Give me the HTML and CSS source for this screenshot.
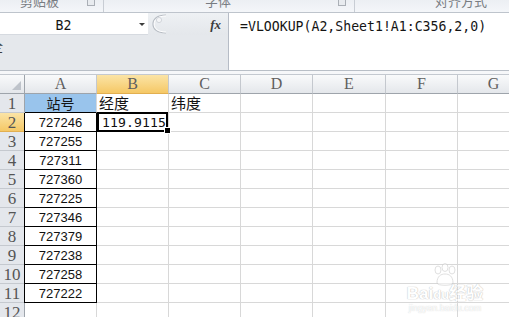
FILE: index.html
```html
<!DOCTYPE html>
<html lang="zh-CN">

<head>
    <meta charset="UTF-8">
    <meta name="viewport" content="width=device-width, initial-scale=1.0">
    <title>VLOOKUP</title>
    <link rel="stylesheet" href="styles.css">
</head>

<body>
    <div class="ribbon">
        <div class="group g-clip"><span class="glabel">剪贴板</span><span class="launch"></span></div>
        <div class="group g-font"><span class="glabel">字体</span><span class="launch"></span></div>
        <div class="group g-align"><span class="glabel">对齐方式</span></div>
    </div>

    <div class="fbar">
        <div class="fleft">
            <div class="namerow">
                <div class="namebox"><span class="nameval">B2</span><span class="drop"></span></div>
                <div class="fctl">
                    <svg class="dimple" width="16" height="20" viewBox="0 0 16 20">
                        <path d="M15 1 C6 1 2 5 2 10 C2 15 6 19 15 19" fill="none" stroke="#b7bcc3" stroke-width="1.2"/>
                        <path d="M15 2 C7 2 3.2 5.5 3.2 10 C3.2 14.5 7 18 15 18" fill="none" stroke="#ffffff" stroke-width="1"/>
                        <circle cx="8" cy="6" r="2.6" fill="#f4f5f7" stroke="#c9cdd3" stroke-width="0.8"/>
                    </svg>
                    <span class="fx">fx</span>
                </div>
            </div>
            <div class="fbelow"><span class="cut">全</span></div>
        </div>
        <div class="finput">=VLOOKUP(A2,Sheet1!A1:C356,2,0)</div>
    </div>

    <div class="gap"></div>

    <div class="sheet" id="sheet">
        <div class="mark">
            <svg class="paw" width="30" height="24" viewBox="0 0 30 24">
                <ellipse cx="8" cy="7" rx="3" ry="4" fill="#fff" stroke="#c8c8c8"/>
                <ellipse cx="15" cy="4.5" rx="3" ry="4" fill="#fff" stroke="#c8c8c8"/>
                <ellipse cx="22" cy="7" rx="3" ry="4" fill="#fff" stroke="#c8c8c8"/>
                <path d="M7 20 C7 13 11 11 15 11 C19 11 23 13 23 20 C23 23 7 23 7 20 Z" fill="#fff" stroke="#c8c8c8"/>
            </svg>
            <div class="mark-name">Bai<span class="du">du</span>经验</div>
            <div class="mark-url">jingyan.baidu.com</div>
        </div>
    </div>

    <script>
        const sheet = document.getElementById("sheet");
        const cols = ["A", "B", "C", "D", "E", "F", "G"];
        const ids = ["727246", "727255", "727311", "727360", "727225",
            "727346", "727379", "727238", "727258", "727222"];

        function addCell(cls, text) {
            const cell = document.createElement("DIV");
            cell.className = "cell " + cls;
            if (text) {
                cell.textContent = text;
            }
            sheet.appendChild(cell);
            return cell;
        }

        addCell("corner", "");
        for (let i = 0; i < cols.length; i++) {
            addCell(cols[i] == "B" ? "colhead active" : "colhead", cols[i]);
        }

        for (let r = 1; r <= 12; r++) {
            addCell(r == 2 ? "rowhead active" : "rowhead", String(r));
            for (let c = 0; c < cols.length; c++) {
                let cls = "";
                let text = "";
                if (c == 0 && r == 1) {
                    cls = "title";
                    text = "站号";
                } else if (c == 0 && r <= 11) {
                    cls = "boxed";
                    text = ids[r - 2];
                } else if (c == 1 && r == 1) {
                    cls = "label";
                    text = "经度";
                } else if (c == 2 && r == 1) {
                    cls = "label";
                    text = "纬度";
                } else if (c == 1 && r == 2) {
                    cls = "value selected";
                    text = "119.9115";
                }
                addCell(cls, text);
            }
        }
    </script>
</body>

</html>
```

FILE: styles.css
```css
body {
    margin: 0;
    width: 509px;
    height: 317px;
    overflow: hidden;
    background: rgb(255, 255, 255);
    font-family: "Liberation Sans", "Noto Sans CJK SC", sans-serif;
}

/* ribbon group captions, cut off at the top */
.ribbon {
    display: flex;
    height: 12px;
    overflow: hidden;
    background: linear-gradient(rgb(236, 239, 243), rgb(244, 246, 249));
    border-bottom: 1px solid rgb(190, 196, 204);
}

.group {
    display: flex;
    align-items: flex-start;
    box-sizing: border-box;
    border-right: 1px solid rgb(200, 205, 212);
    flex-shrink: 0;
}

.g-clip {
    width: 104px;
    padding-left: 20px;
}

.g-font {
    width: 251px;
    padding-left: 101px;
}

.g-align {
    flex: 1;
    padding-left: 80px;
    border-right: none;
}

.glabel {
    font-family: "Noto Sans CJK SC", sans-serif;
    font-size: 13px;
    line-height: 14px;
    margin-top: -6px;
    color: rgb(120, 124, 130);
    white-space: nowrap;
}

.launch {
    width: 6px;
    height: 5px;
    margin-left: auto;
    margin-right: 8px;
    border: 1px solid rgb(170, 175, 182);
    border-top: none;
    background: rgb(232, 235, 239);
}

/* formula bar */
.fbar {
    display: flex;
    height: 57px;
    border-bottom: 1px solid rgb(185, 191, 199);
}

.fleft {
    width: 228px;
    display: flex;
    flex-direction: column;
    border-right: 1px solid rgb(182, 188, 198);
    background: rgb(229, 232, 236);
}

.namerow {
    display: flex;
    height: 22px;
}

.namebox {
    width: 148px;
    background: rgb(255, 255, 255);
    display: flex;
    align-items: center;
    border-bottom: 1px solid rgb(214, 218, 224);
}

.nameval {
    flex: 1;
    text-align: center;
    padding-right: 12px;
    padding-top: 3px;
    font-family: "DejaVu Sans Mono", monospace;
    font-size: 13.2px;
    color: rgb(20, 20, 20);
}

.drop {
    width: 0;
    height: 0;
    margin-right: 3px;
    margin-top: 2px;
    border-left: 3px solid transparent;
    border-right: 3px solid transparent;
    border-top: 3px solid rgb(60, 60, 60);
}

.fctl {
    flex: 1;
    display: flex;
    align-items: center;
    padding-left: 3px;
    background: linear-gradient(rgb(238, 241, 244), rgb(228, 231, 235));
}

.dimple {
    display: block;
}

.fx {
    margin-left: auto;
    margin-right: 7px;
    margin-top: 1px;
    font-family: "Liberation Serif", serif;
    font-style: italic;
    font-weight: bold;
    font-size: 13px;
    color: rgb(60, 60, 60);
}

.fbelow {
    flex: 1;
    overflow: hidden;
}

.cut {
    display: block;
    margin-left: -10px;
    margin-top: 4px;
    font-family: "Noto Sans CJK SC", sans-serif;
    font-size: 13px;
    line-height: 14px;
    color: rgb(60, 60, 60);
}

.finput {
    flex: 1;
    padding: 6px 0 0 11px;
    font-family: "DejaVu Sans Mono", monospace;
    font-size: 13.2px;
    line-height: 16px;
    color: rgb(20, 20, 20);
    white-space: nowrap;
}

.gap {
    height: 3px;
    background: rgb(246, 247, 249);
    border-bottom: 1px solid rgb(196, 201, 208);
}

/* worksheet */
.sheet {
    position: relative;
    display: grid;
    grid-template-columns: 25px 72px 72px 72px 72px 73px 72px 72px;
    grid-auto-rows: 19px;
    width: 530px;
}

.cell {
    box-sizing: border-box;
    border-right: 1px solid rgb(216, 216, 216);
    border-bottom: 1px solid rgb(216, 216, 216);
    white-space: nowrap;
    font-size: 13px;
    line-height: 19px;
    color: rgb(17, 17, 17);
}

.corner,
.colhead {
    background: linear-gradient(rgb(249, 250, 251), rgb(228, 231, 235));
    border-right: 1px solid rgb(196, 200, 206);
    border-bottom: 1px solid rgb(158, 164, 171);
}

.corner {
    position: relative;
    border-right-color: rgb(158, 164, 171);
}

.corner::after {
    content: "";
    position: absolute;
    right: 3px;
    bottom: 3px;
    width: 0;
    height: 0;
    border-left: 9px solid transparent;
    border-bottom: 9px solid rgb(190, 195, 202);
}

.colhead {
    text-align: center;
    font-family: "Liberation Serif", serif;
    font-size: 16px;
    line-height: 18px;
    color: rgb(95, 95, 95);
}

.rowhead {
    text-align: center;
    background: rgb(228, 231, 236);
    border-right: 1px solid rgb(158, 164, 171);
    border-bottom: 1px solid rgb(197, 201, 207);
    font-family: "Liberation Serif", serif;
    font-size: 17px;
    line-height: 19px;
    color: rgb(85, 85, 85);
}

.colhead.active,
.rowhead.active {
    background: linear-gradient(rgb(251, 228, 166), rgb(245, 200, 102));
    border-bottom-color: rgb(226, 175, 80);
}

.title {
    text-align: center;
    background: rgb(153, 196, 236);
    border-bottom: 1px solid rgb(0, 0, 0);
    font-family: "Noto Sans CJK SC", sans-serif;
    font-size: 14px;
    color: rgb(20, 20, 20);
}

.boxed {
    text-align: center;
    padding-top: 1px;
    line-height: 18px;
    border-right: 1px solid rgb(0, 0, 0);
    border-bottom: 1px solid rgb(0, 0, 0);
    box-shadow: -1px 0 0 rgb(0, 0, 0);
}

.label {
    padding-left: 2px;
    font-family: "Noto Sans CJK SC", sans-serif;
    font-size: 15px;
    line-height: 18px;
    color: rgb(20, 20, 20);
}

.value {
    padding-left: 5px;
    padding-top: 1px;
    font-family: "DejaVu Sans Mono", monospace;
    font-size: 13.1px;
    line-height: 18px;
    letter-spacing: 0.1px;
}

.selected {
    position: relative;
}

.selected::before {
    content: "";
    position: absolute;
    top: -1px;
    left: 0;
    right: 0;
    bottom: -1px;
    border: 2px solid rgb(0, 0, 0);
}

.selected::after {
    content: "";
    position: absolute;
    right: -3px;
    bottom: -3px;
    width: 5px;
    height: 5px;
    background: rgb(0, 0, 0);
    border: 1px solid rgb(255, 255, 255);
}

/* faint watermark in the corner */
.mark {
    position: absolute;
    left: 404px;
    top: 188px;
    width: 82px;
    text-align: center;
    opacity: 0.55;
}

.paw {
    display: block;
    margin: 0 auto -2px;
}

.mark-name {
    font-family: "Liberation Sans", "Noto Sans CJK SC", sans-serif;
    font-size: 17px;
    line-height: 17px;
    font-weight: bold;
    color: rgb(255, 255, 255);
    text-shadow: 0 0 1px rgb(150, 150, 150), 0 0 1px rgb(150, 150, 150);
}

.du {
    font-size: 13px;
}

.mark-url {
    font-size: 9px;
    line-height: 10px;
    color: rgb(255, 255, 255);
    text-shadow: 0 0 1px rgb(150, 150, 150);
}
```
